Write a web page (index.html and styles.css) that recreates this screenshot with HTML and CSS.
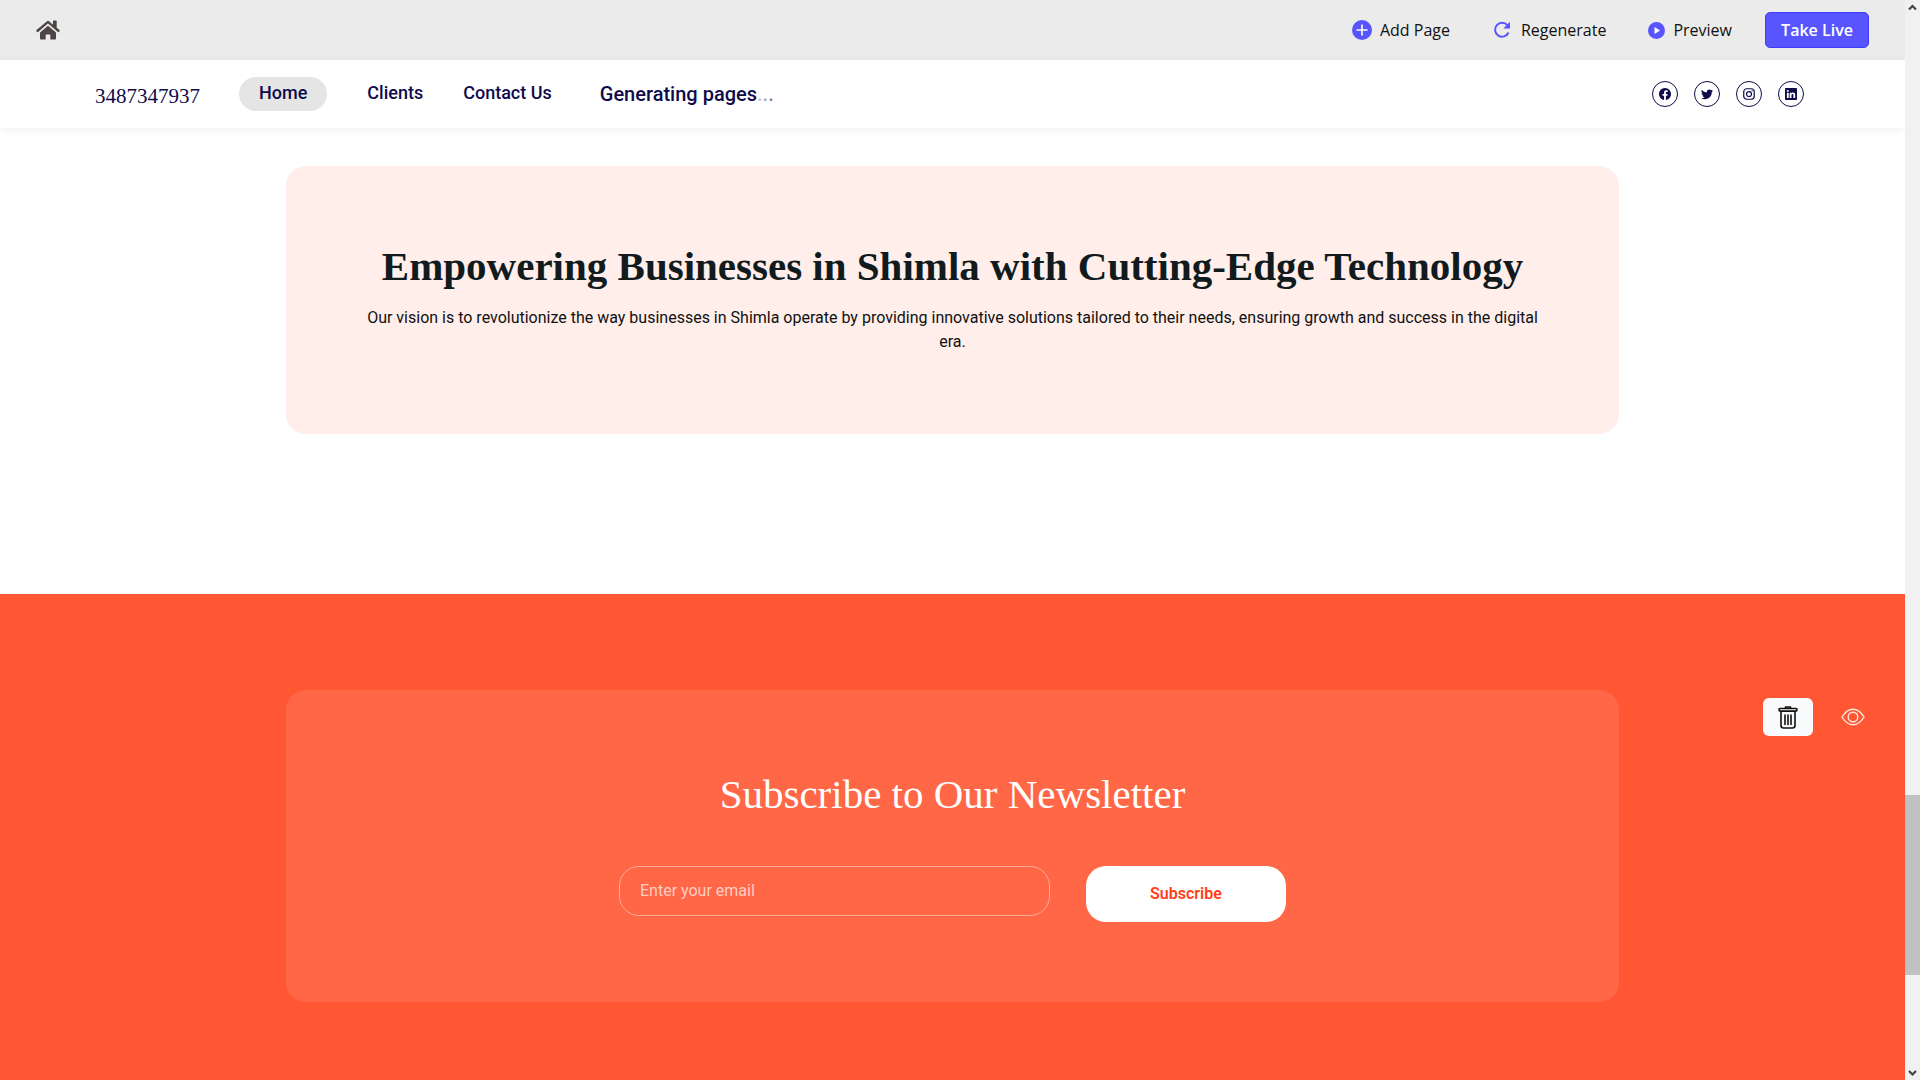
FILE: index.html
```html
<!DOCTYPE html>
<html lang="en">
<head>
<meta charset="utf-8">
<meta name="viewport" content="width=device-width, initial-scale=1">
<title>3487347937</title>
<link rel="stylesheet" href="styles.css">
</head>
<body>
<div class="page">
  <header class="toolbar">
    <a class="home-link" href="#" aria-label="Dashboard">
      <svg width="24" height="20" viewBox="0 0 24 20" fill="#4d4444"><path d="M11 1.3a1.5 1.5 0 0 1 2 0L17 4.700V1.200a.6.600 0 0 1 .6-.6h2.500a.6.600 0 0 1 .6.600v6.600l2.800 2.300a.7.700 0 0 1 .1 1l-.7.800a.7.700 0 0 1-1 .1L12.400 3.800a.6.600 0 0 0-.8 0L2.100 12a.7.700 0 0 1-1-.1l-.7-.8a.7.700 0 0 1 .1-1z"/><path d="M12 5.700l8 6.800v6.300a.8.800 0 0 1-.8.800H14.300v-5.200h-4.600v5.200H4.800a.8.800 0 0 1-.8-.8v-6.300z"/></svg>
    </a>
    <div class="tools">
      <button class="tool" type="button">
        <svg width="20" height="20" viewBox="0 0 20 20"><circle cx="10" cy="10" r="10" fill="#5855ff"/><path d="M10 5v10M5 10h10" stroke="#fff" stroke-width="1.600" stroke-linecap="round"/></svg>
        Add Page
      </button>
      <button class="tool tool-regenerate" type="button">
        <svg width="18" height="18" viewBox="0 0 18 18" fill="none" stroke="#5855ff"><path d="M14.500 4.300A7 7 0 1 0 15.500 11.500" stroke-width="2"/><path d="M17 .8v6.700h-6.700z" fill="#5855ff" stroke="none"/></svg>
        Regenerate
      </button>
      <button class="tool tool-preview" type="button">
        <svg width="17" height="17" viewBox="0 0 17 17"><circle cx="8.500" cy="8.500" r="8.500" fill="#5855ff"/><path d="M6.500 5v7l5.500-3.500z" fill="#fff"/></svg>
        Preview
      </button>
      <button class="take-live" type="button">Take Live</button>
    </div>
  </header>

  <nav class="site-nav">
    <a class="brand" href="#">3487347937</a>
    <div class="links">
      <a class="link active" href="#">Home</a>
      <a class="link" href="#">Clients</a>
      <a class="link" href="#">Contact Us</a>
    </div>
    <span class="status">Generating pages<span class="dot-1">.</span><span class="dot-2">.</span><span class="dot-3">.</span></span>
    <div class="social">
      <a class="social-link" href="#" aria-label="Facebook"><svg width="12" height="12" viewBox="0 0 16 16"><path d="M16 8.049c0-4.446-3.582-8.050-8-8.050C3.580 0 0 3.603 0 8.049c0 4.017 2.926 7.347 6.750 7.951v-5.625h-2.030V8.050H6.750V6.275c0-2.017 1.195-3.131 3.022-3.131.876 0 1.791.157 1.791.157v1.980h-1.009c-.993 0-1.303.621-1.303 1.258v1.510h2.218l-.354 2.326H9.250V16c3.824-.604 6.750-3.934 6.750-7.951"/></svg></a>
      <a class="social-link" href="#" aria-label="Twitter"><svg width="12" height="12" viewBox="0 0 16 16"><path d="M5.026 15c6.038 0 9.341-5.003 9.341-9.334q.002-.211-.006-.422A6.700 6.700 0 0 0 16 3.542a6.700 6.700 0 0 1-1.889.518 3.300 3.300 0 0 0 1.447-1.817 6.500 6.500 0 0 1-2.087.793A3.286 3.286 0 0 0 7.875 6.030a9.320 9.320 0 0 1-6.767-3.429 3.290 3.290 0 0 0 1.018 4.382A3.300 3.300 0 0 1 .640 6.575v.045a3.290 3.290 0 0 0 2.632 3.218 3.200 3.200 0 0 1-.865.115 3 3 0 0 1-.614-.057 3.280 3.280 0 0 0 3.067 2.277A6.600 6.600 0 0 1 .780 13.580a6 6 0 0 1-.780-.045A9.340 9.340 0 0 0 5.026 15"/></svg></a>
      <a class="social-link" href="#" aria-label="Instagram"><svg width="12" height="12" viewBox="0 0 16 16" fill="none" stroke="#0f0b4b" stroke-width="1.600"><rect x="1" y="1" width="14" height="14" rx="4"/><circle cx="8" cy="8" r="3.300"/><circle cx="12.200" cy="3.800" r=".9" fill="#0f0b4b" stroke="none"/></svg></a>
      <a class="social-link" href="#" aria-label="LinkedIn"><svg width="12" height="12" viewBox="0 0 16 16"><path d="M0 1.146C0 .513.526 0 1.175 0h13.650C15.474 0 16 .513 16 1.146v13.708c0 .633-.526 1.146-1.175 1.146H1.175C.526 16 0 15.487 0 14.854zm4.943 12.248V6.169H2.542v7.225zm-1.200-8.212c.837 0 1.358-.554 1.358-1.248-.015-.709-.520-1.248-1.342-1.248S2.400 3.226 2.400 3.934c0 .694.521 1.248 1.327 1.248zm4.908 8.212V9.359c0-.216.016-.432.080-.586.173-.431.568-.878 1.232-.878.869 0 1.216.662 1.216 1.634v3.865h2.401V9.250c0-2.220-1.184-3.252-2.764-3.252-1.274 0-1.845.700-2.165 1.193v.025h-.016l.016-.025V6.169h-2.400c.030.678 0 7.225 0 7.225z"/></svg></a>
    </div>
  </nav>

  <main class="content">
    <section class="vision">
      <div class="card vision-card">
        <h1 class="vision-title">Empowering Businesses in Shimla with Cutting-Edge Technology</h1>
        <p class="vision-text">Our vision is to revolutionize the way businesses in Shimla operate by providing innovative solutions tailored to their needs, ensuring growth and success in the digital era.</p>
      </div>
    </section>

    <section class="newsletter">
      <div class="card newsletter-card">
        <h2 class="newsletter-title">Subscribe to Our Newsletter</h2>
        <form class="subscribe-form">
          <input class="email" type="email" placeholder="Enter your email" aria-label="Email">
          <button class="subscribe" type="button">Subscribe</button>
        </form>
      </div>
      <div class="section-tools">
        <button class="delete" type="button" aria-label="Delete section">
          <svg width="20" height="23" viewBox="0 0 20 23" fill="none" stroke="#111" stroke-width="1.600" stroke-linecap="round" stroke-linejoin="round"><rect x="1" y="2.500" width="18" height="2.600" rx="1"/><path d="M7.500 2V1h5v1" /><path d="M3 5.500v14a2.500 2.500 0 0 0 2.500 2.500h9a2.500 2.500 0 0 0 2.500-2.500v-14M7 9v9.500M10 9v9.500M13 9v9.500"/></svg>
        </button>
        <button class="hide" type="button" aria-label="Hide section">
          <svg width="24" height="18" viewBox="0 0 24 18" fill="none" stroke="#ffe6df" stroke-width="1.400"><path d="M1 9C4 4 7.500 1.200 12 1.200S20 4 23 9c-3 5-6.500 7.800-11 7.800S4 14 1 9z" stroke-linejoin="round"/><circle cx="12" cy="9" r="4.800"/></svg>
        </button>
      </div>
    </section>
  </main>
</div>

<div class="scrollbar" aria-hidden="true">
  <svg class="arrow" width="15" height="15" viewBox="0 0 15 15" fill="none" stroke="#444" stroke-width="2.200"><path d="M4 9.500l3.500-3.500 3.500 3.500"/></svg>
  <div class="track"><div class="thumb"></div></div>
  <svg class="arrow" width="15" height="15" viewBox="0 0 15 15" fill="none" stroke="#444" stroke-width="2.200"><path d="M4 6l3.500 3.500 3.500-3.500"/></svg>
</div>
</body>
</html>
```
FILE: styles.css
```css
* { box-sizing: border-box; }

body {
  margin: 0;
  display: flex;
  align-items: flex-start;
  background: #fff;
  font-family: Roboto, sans-serif;
  font-size: 16px;
  line-height: 24px;
}

a { color: inherit; text-decoration: none; }
button { border: 0; padding: 0; background: none; font: inherit; color: inherit; cursor: pointer; }
svg { display: block; flex: none; }

.page {
  flex: 1;
  min-width: 0;
  min-height: 100vh;
  display: flex;
  flex-direction: column;
}

/* Editor toolbar */
.toolbar {
  height: 60px;
  display: flex;
  align-items: center;
  justify-content: space-between;
  padding: 0 36px;
  background: #ebebeb;
  font-family: "Open Sans", sans-serif;
  color: #111;
}
.tools { display: flex; align-items: center; }
.tool { display: flex; align-items: center; gap: 8px; }
.tool-regenerate { margin-left: 43px; gap: 10px; }
.tool-preview { margin-left: 42px; }
.take-live {
  width: 104px;
  height: 36px;
  margin-left: 33px;
  border: 1px solid #403cff;
  border-radius: 5px;
  background: #5855ff;
  color: #fff;
  font-weight: 600;
}

/* Site navigation */
.site-nav {
  height: 68px;
  display: flex;
  align-items: center;
  padding: 0 101px 0 95px;
  box-shadow: 0 2px 8px rgba(0, 0, 0, .06);
  color: #0f0b4b;
  font-weight: 500;
}
.brand {
  padding-top: 4px;
  font-family: "Liberation Serif", serif;
  font-size: 21px;
}
.links { display: flex; margin-left: 39px; }
.link {
  padding: 4px 20px 6px;
  border-radius: 17px;
  font-size: 18px;
}
.active { margin-right: 20px; background: #e5e5e5; }
.status { margin-left: 28px; font-size: 20px; }
.dot-1 { opacity: .25; }
.dot-2 { opacity: .35; }
.dot-3 { opacity: .5; }
.social { display: flex; gap: 16px; margin-left: auto; }
.social-link {
  width: 26px;
  height: 26px;
  display: grid;
  place-items: center;
  border: 1px solid #0f0b4b;
  border-radius: 50%;
  fill: #0f0b4b;
}

/* Sections */
.content { flex: 1; display: flex; flex-direction: column; }
.card {
  width: 70%;
  margin: 0 auto;
  border-radius: 20px;
  text-align: center;
}
.vision { padding: 38px 0 160px; }
.vision-card { padding: 72px 80px 80px; background: #ffeeea; }
.vision-title, .newsletter-title {
  margin: 0;
  font-family: "Liberation Serif", serif;
  font-size: 41px;
  line-height: 56px;
}
.vision-title { color: #111b1e; }
.vision-text { margin: 12px 0 0; color: #111; }

.newsletter {
  position: relative;
  flex: 1;
  padding: 96px 0 78px;
  background: #ff5733;
}
.newsletter-card { padding: 76px 80px 80px; background: #ff6747; }
.newsletter-title { font-weight: 400; color: #fff; }
.subscribe-form {
  display: flex;
  justify-content: center;
  align-items: flex-start;
  gap: 36px;
  margin-top: 44px;
}
.email {
  width: 431px;
  height: 50px;
  padding: 0 20px 2px;
  border: 1px solid #ffab99;
  border-radius: 20px;
  background: transparent;
  color: #fff;
  font: inherit;
}
.email::placeholder { color: #ffcdc2; opacity: 1; }
.subscribe {
  width: 200px;
  height: 56px;
  border-radius: 20px;
  background: #fff;
  color: #ff3f17;
  font-weight: 600;
}

/* Controls laid over the section's corner */
.section-tools {
  position: absolute;
  top: 104px;
  right: 40px;
  display: flex;
  align-items: center;
  gap: 28px;
}
.delete {
  width: 50px;
  height: 38px;
  display: grid;
  place-items: center;
  border-radius: 6px;
  background: #f9fafb;
}

/* Scroll rail */
.scrollbar {
  position: sticky;
  top: 0;
  width: 15px;
  height: 100vh;
  display: flex;
  flex-direction: column;
  background: #f1f1f1;
}
.track { flex: 1; display: grid; grid-template-rows: 780fr 180fr 90fr; }
.thumb { grid-row: 2; background: #c1c1c1; }
```
